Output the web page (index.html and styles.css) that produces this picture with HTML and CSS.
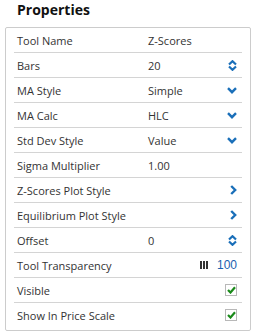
FILE: index.html
```html
<!DOCTYPE html>
<html>
<head>
<meta charset="utf-8">
<link rel="stylesheet" href="styles.css">
</head>
<body>
<h1 class="title">Properties</h1>
<div class="panel">
  <div class="row"><span class="label">Tool Name</span><span class="value">Z-Scores</span><span class="ctl"></span></div>
  <div class="row"><span class="label">Bars</span><span class="value">20</span><span class="ctl">
    <svg width="9" height="11" viewBox="0 0 9 11"><path d="M1 4.5 L4.5 1.2 L8 4.5 M1 6.5 L4.5 9.8 L8 6.5" fill="none" stroke="#1a6fb9" stroke-width="2.2"/></svg></span></div>
  <div class="row"><span class="label">MA Style</span><span class="value">Simple</span><span class="ctl">
    <svg width="10" height="7" viewBox="0 0 10 7"><path d="M1 1.2 L5 5.2 L9 1.2" fill="none" stroke="#1a6fb9" stroke-width="2.4"/></svg></span></div>
  <div class="row"><span class="label">MA Calc</span><span class="value">HLC</span><span class="ctl">
    <svg width="10" height="7" viewBox="0 0 10 7"><path d="M1 1.2 L5 5.2 L9 1.2" fill="none" stroke="#1a6fb9" stroke-width="2.4"/></svg></span></div>
  <div class="row"><span class="label">Std Dev Style</span><span class="value">Value</span><span class="ctl">
    <svg width="10" height="7" viewBox="0 0 10 7"><path d="M1 1.2 L5 5.2 L9 1.2" fill="none" stroke="#1a6fb9" stroke-width="2.4"/></svg></span></div>
  <div class="row"><span class="label">Sigma Multiplier</span><span class="value">1.00</span><span class="ctl"></span></div>
  <div class="row"><span class="label">Z-Scores Plot Style</span><span class="value"></span><span class="ctl">
    <svg width="7" height="10" viewBox="0 0 7 10"><path d="M1.2 1 L5.2 5 L1.2 9" fill="none" stroke="#1a6fb9" stroke-width="2.4"/></svg></span></div>
  <div class="row"><span class="label">Equilibrium Plot Style</span><span class="value"></span><span class="ctl">
    <svg width="7" height="10" viewBox="0 0 7 10"><path d="M1.2 1 L5.2 5 L1.2 9" fill="none" stroke="#1a6fb9" stroke-width="2.4"/></svg></span></div>
  <div class="row"><span class="label">Offset</span><span class="value">0</span><span class="ctl">
    <svg width="9" height="11" viewBox="0 0 9 11"><path d="M1 4.5 L4.5 1.2 L8 4.5 M1 6.5 L4.5 9.8 L8 6.5" fill="none" stroke="#1a6fb9" stroke-width="2.2"/></svg></span></div>
  <div class="row"><span class="label">Tool Transparency</span><span class="value"></span><span class="ctl trans"><span class="bars"><i></i><i></i><i></i></span><span class="num">100</span></span></div>
  <div class="row"><span class="label">Visible</span><span class="value"></span><span class="ctl"><span class="check">
    <svg width="9" height="8" viewBox="0 0 9 8"><path d="M1 4 L3.5 6.5 L8 1.2" fill="none" stroke="#1a8a1a" stroke-width="2.2"/></svg></span></span></div>
  <div class="row last"><span class="label">Show In Price Scale</span><span class="value"></span><span class="ctl"><span class="check">
    <svg width="9" height="8" viewBox="0 0 9 8"><path d="M1 4 L3.5 6.5 L8 1.2" fill="none" stroke="#1a8a1a" stroke-width="2.2"/></svg></span></span></div>
</div>
</body>
</html>
```
FILE: styles.css
```css
html, body {
  margin: 0;
  padding: 0;
  background: #ffffff;
}
body {
  font-family: "Open Sans", "Liberation Sans", sans-serif;
  color: #333333;
}
.title {
  margin: 0;
  padding: 0 0 0 17px;
  height: 27px;
  font-size: 14px;
  font-weight: 700;
  line-height: 20px;
  color: #111111;
}
.panel {
  margin-left: 5px;
  width: 228px;
  padding: 0 8px 3px 8px;
  border: 1px solid #cccccc;
  border-radius: 2px;
}
.row {
  display: grid;
  grid-template-columns: 131px 1fr auto;
  align-items: center;
  height: 24px;
  padding: 0 5px 0 3px;
  border-bottom: 1px solid #d4d4d4;
  font-size: 11px;
}
.row.last {
  border-bottom: none;
}
.label {
  white-space: nowrap;
}
.ctl {
  display: flex;
  align-items: center;
  justify-content: flex-end;
}
.ctl svg {
  display: block;
}
.bars {
  display: flex;
  gap: 1px;
  margin-right: 9px;
}
.bars i {
  display: block;
  width: 2px;
  height: 8px;
  background: #333333;
}
.num {
  font-family: "Liberation Sans", Arial, sans-serif;
  font-size: 12px;
  color: #1a5fb0;
}
.check {
  display: flex;
  align-items: center;
  justify-content: center;
  width: 10px;
  height: 10px;
  border: 1px solid #b8b8b8;
  background: #ffffff;
}
```
